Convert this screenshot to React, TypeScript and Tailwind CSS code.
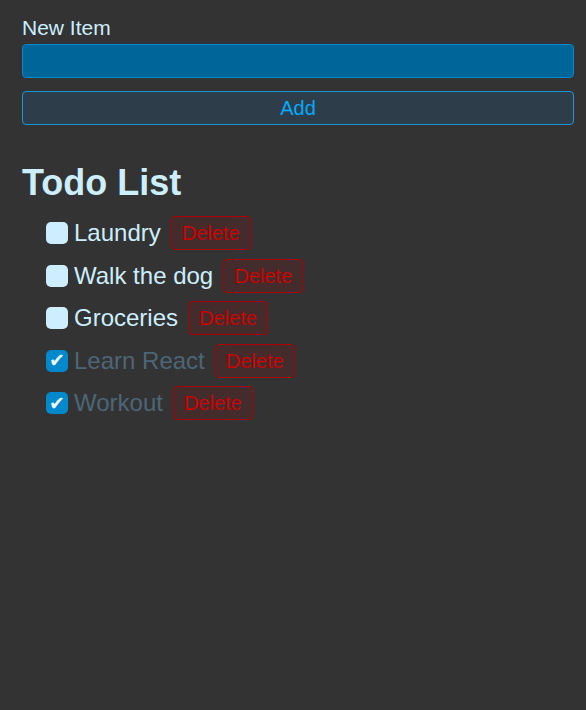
const todos = [
  { id: 1, text: "Laundry", done: false },
  { id: 2, text: "Walk the dog", done: false },
  { id: 3, text: "Groceries", done: false },
  { id: 4, text: "Learn React", done: true },
  { id: 5, text: "Workout", done: true },
]

// single todo row: checkbox, label, delete
const TodoRow = ({ text, done }: { text: string; done: boolean }) => (
  <li className="flex h-[34px] items-center">
    {done ? (
      <span className="flex h-[22px] w-[22px] items-center justify-center rounded-[5px] bg-[#0088cc] text-[19px] leading-none text-[#eef8ff] font-['DejaVu_Sans',sans-serif]">
        ✔
      </span>
    ) : (
      <span className="h-[22px] w-[22px] rounded-[5px] bg-[#cceeff]" />
    )}
    <span className={`ml-[6px] text-[24px] leading-none ${done ? "text-[#4d6677]" : "text-[#cceeff]"}`}>{text}</span>
    <button className="ml-[10px] h-[34px] rounded-[4px] border border-[#aa0000] bg-[#442c2c] px-[10px] text-[20px] leading-none text-[#cc0000]">
      Delete
    </button>
  </li>
)

export default function App() {
  return (
    <div className="min-h-[710px] bg-[#333333] pl-[22px] pr-[12px] pt-[14px] font-['Liberation_Sans',Arial,sans-serif]">
      <label className="block text-[21px] leading-[28px] text-[#cceeff]">New Item</label>
      <input className="mt-[2px] block h-[34px] w-full rounded-[4px] border border-[#0088cc] bg-[#006699] text-[20px] text-white outline-none" />
      <button className="mt-[13px] block h-[34px] w-full rounded-[4px] border border-[#1a94d6] bg-[#2d3e4a] text-[20px] leading-none text-[#00aaff]">
        Add
      </button>

      <h1 className="mt-[38px] text-[36px] font-bold leading-[40px] text-[#cceeff]">Todo List</h1>
      <ul className="mt-[13px] flex flex-col gap-[8.5px] pl-[24px]">
        {todos.map((t) => (
          <TodoRow key={t.id} text={t.text} done={t.done} />
        ))}
      </ul>
    </div>
  )
}
